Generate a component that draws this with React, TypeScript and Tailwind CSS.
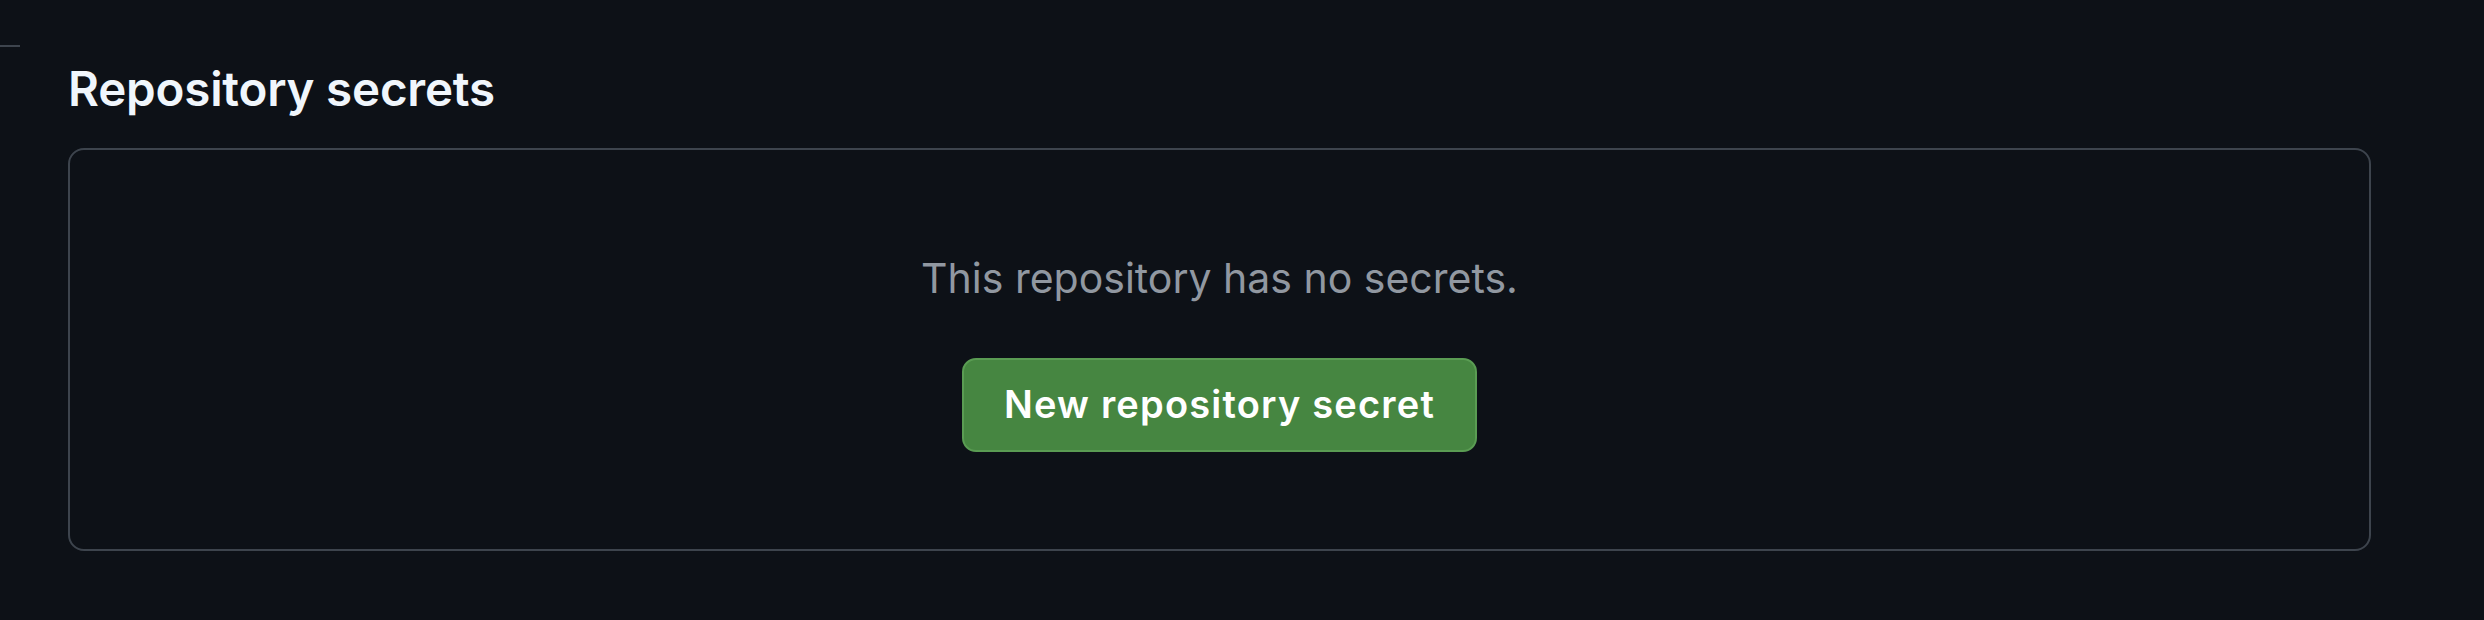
import React from "react";

export default function App() {
  return (
    <div
      className="w-[2484px] h-[620px] bg-[#0d1117] overflow-hidden"
      style={{ fontFamily: 'Inter, "Noto Sans", "Liberation Sans", sans-serif' }}
    >
      <div className="pt-[45px]">
        <div className="w-[20px] h-[2px] bg-[#3d444d]" />
      </div>
      <div className="pl-[68px] pr-[113px]">
        <h2 className="mt-[12px] text-[47.5px] leading-[1.25] font-semibold text-[#f0f6fc] tracking-[-0.2px]">
          Repository secrets
        </h2>
        <div className="mt-[30px] border-2 border-[#3d444d] rounded-[16px] flex flex-col items-center pt-[98px] pb-[97px]">
          <p className="text-[41px] leading-[1.5] text-[#9198a1]">
            This repository has no secrets.
          </p>
          <button className="mt-[48px] h-[94px] px-[40px] flex items-center rounded-[14px] bg-[#468641] border-2 border-[#5a9c53] text-white text-[38px] font-semibold tracking-[1.2px]">
            New repository secret
          </button>
        </div>
      </div>
    </div>
  );
}
